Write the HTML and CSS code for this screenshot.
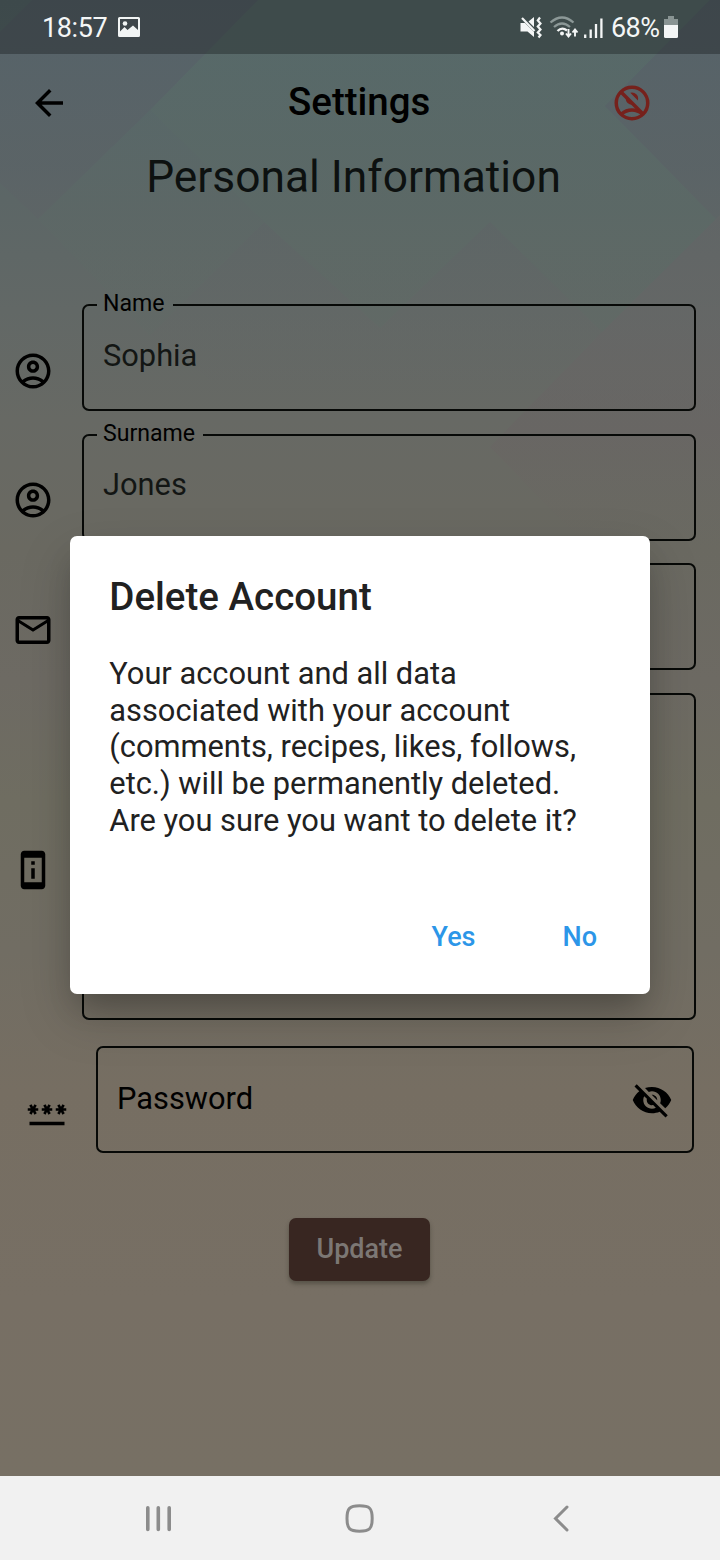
FILE: index.html
```html
<!DOCTYPE html>
<html lang="en">
<head>
<meta charset="utf-8">
<title>Settings</title>
<link rel="stylesheet" href="styles.css">
</head>
<body>
<svg class="symbols" aria-hidden="true">
  <symbol id="person" viewBox="0 0 24 24"><path d="M12 2C6.48 2 2 6.48 2 12s4.48 10 10 10 10-4.48 10-10S17.52 2 12 2zM7.35 18.5C8.66 17.56 10.26 17 12 17s3.34.56 4.65 1.5c-1.31.94-2.91 1.5-4.65 1.5s-3.34-.56-4.65-1.5zm10.79-1.38C16.45 15.8 14.32 15 12 15s-4.45.8-6.14 2.12C4.7 15.73 4 13.95 4 12c0-4.42 3.58-8 8-8s8 3.58 8 8c0 1.95-.7 3.73-1.86 5.12zM12 6c-1.93 0-3.5 1.57-3.5 3.5S10.07 13 12 13s3.5-1.57 3.5-3.5S13.93 6 12 6zm0 5c-.83 0-1.5-.67-1.5-1.5S11.17 8 12 8s1.5.67 1.5 1.5S12.83 11 12 11z"/></symbol>
  <symbol id="star" viewBox="0 0 8 24"><path d="M3.15 12.95L4 11.47l.85 1.48 1.3-.75-.85-1.48H7v-1.5H5.3l.85-1.47L4.85 7 4 8.47 3.15 7l-1.3.75.85 1.47H1v1.5h1.7l-.85 1.48z"/></symbol>
</svg>
<div class="screen">
  <svg class="backdrop" viewBox="0 0 720 1476" aria-hidden="true">
    <defs>
      <linearGradient id="green" x1="0" y1="0" x2="0" y2="340" gradientUnits="userSpaceOnUse"><stop offset="0" stop-color="#576a68" stop-opacity=".7"/><stop offset=".6" stop-color="#5b6a66" stop-opacity=".6"/><stop offset="1" stop-color="#606a65" stop-opacity=".5"/></linearGradient>
      <linearGradient id="violet" x1="0" y1="0" x2="0" y2="330" gradientUnits="userSpaceOnUse"><stop offset="0" stop-color="#566168" stop-opacity=".7"/><stop offset=".5" stop-color="#5b6266" stop-opacity=".6"/><stop offset="1" stop-color="#646666" stop-opacity=".3"/></linearGradient>
      <linearGradient id="rose" x1="0" y1="300" x2="0" y2="560" gradientUnits="userSpaceOnUse"><stop offset="0" stop-color="#696466" stop-opacity=".3"/><stop offset=".5" stop-color="#696363" stop-opacity=".5"/><stop offset="1" stop-color="#6c6861" stop-opacity="0"/></linearGradient>
    </defs>
    <path fill="url(#green)" d="M258 0H710L605 106L716 219L602 332L490 222L380 328L264 222L150 110Z"/>
    <path fill="url(#green)" opacity=".5" d="M0 0H32L0 32ZM150 110L264 222L150 336L38 219Z"/>
    <path fill="url(#violet)" d="M32 0H258L150 110L38 219L0 183V32ZM720 0H710L605 106L716 219L720 215Z"/>
    <path fill="url(#violet)" opacity=".5" d="M264 222L380 328L490 222L602 332L550 380H210L150 336Z"/>
    <path fill="url(#rose)" d="M720 215L602 332L490 447L600 560H720Z"/>
  </svg>

  <header class="status">
    <span class="clock">18:57</span>
    <svg class="status-photo" viewBox="0 0 22 20" width="22" height="20"><path fill="#f1f4f4" fill-rule="evenodd" d="M1.500 0H20.500Q22 0 22 1.500V18.500Q22 20 20.500 20H1.500Q0 20 0 18.500V1.500Q0 0 1.500 0ZM2 2V14.500L6.500 10L9.500 13L15 8.500L20 13V2Z"/><circle cx="7" cy="6.500" r="2.300" fill="#f1f4f4"/></svg>
    <span class="grow"></span>
    <svg class="status-tray" viewBox="0 0 84 24" width="84" height="24">
      <g fill="#f4f6f6"><path d="M.5 8H5L14 17V22L7.500 16.500H.5ZM8.500 6.500L14 2V12Z"/><path d="M2 3L14.500 16" stroke="#f4f6f6" stroke-width="2.200"/></g>
      <g fill="none" stroke="#f4f6f6" stroke-width="2.200"><path d="M20 2.500L17.800 5.500L20.500 8.500L17.800 11.500L20.500 14.500L17.800 17.500L20.500 20L18.500 22.500"/></g>
      <g fill="none" stroke-width="2.300"><path stroke="#8c9897" d="M30.500 7.500Q42 -2.500 53.500 7.500M34 12Q42 5 50 12"/><path stroke="#f4f6f6" d="M37.500 16Q42 11.500 47 15.500"/></g>
      <circle cx="42" cy="18.500" r="2" fill="#f4f6f6"/>
      <path d="M48.500 14V21M46 18.500L48.500 21.500L51 18.500M55 21.500V15M52.500 17.500L55 14.500L57.500 17.500" fill="none" stroke="#f4f6f6" stroke-width="1.900"/>
      <path d="M65.200 23V19.500M70.700 23V14.500M76 23V9M81.400 23V3.500" stroke="#f4f6f6" stroke-width="2.300"/>
    </svg>
    <span class="battery-text">68%</span>
    <svg class="status-battery" viewBox="0 0 14 22" width="14" height="22"><path fill="#899493" d="M4 0H10V3H14V10H0V3H4Z"/><path fill="#f4f6f6" d="M0 9H14V20.500Q14 22 12.500 22H1.500Q0 22 0 20.500Z"/></svg>
  </header>

  <div class="appbar">
    <svg class="icon" viewBox="0 0 24 24"><path d="M20 11H7.830l5.590-5.590L12 4l-8 8 8 8 1.410-1.410L7.830 13H20v-2z"/></svg>
    <h1 class="appbar-title"><span>Settings</span></h1>
    <svg class="icon danger" viewBox="0 0 24 24"><g fill="none" stroke="currentColor" stroke-width="2"><circle cx="12" cy="12" r="9"/><path d="M5.300 5.300L18.700 18.700"/><path d="M6 18.300Q8.600 16 12 16T18 18.300"/></g><path d="M11 6.150A3.500 3.500 0 0 1 15.350 10.500ZM8.600 8.600A3.500 3.500 0 0 0 12.900 12.900Z"/></svg>
  </div>

  <h2 class="heading"><span>Personal Information</span></h2>

  <form class="form">
    <div class="row">
      <svg class="icon"><use href="#person"/></svg>
      <fieldset class="field"><legend>Name</legend><span class="value">Sophia</span></fieldset>
    </div>
    <div class="row">
      <svg class="icon"><use href="#person"/></svg>
      <fieldset class="field"><legend>Surname</legend><span class="value">Jones</span></fieldset>
    </div>
    <div class="row">
      <svg class="icon" viewBox="0 0 24 24"><path d="M22 6c0-1.100-.9-2-2-2H4c-1.100 0-2 .9-2 2v12c0 1.100.9 2 2 2h16c1.100 0 2-.9 2-2V6zm-2 0l-8 5-8-5h16zm0 12H4V8l8 5 8-5v10z"/></svg>
      <div class="field plain"></div>
    </div>
    <div class="row about">
      <svg class="icon" viewBox="0 0 24 24"><path fill-rule="evenodd" d="M13 7h-2v2h2V7zm0 4h-2v6h2v-6zm4-9.990L7 1c-1.100 0-2 .9-2 2v18c0 1.100.9 2 2 2h10c1.100 0 2-.9 2-2V3c0-1.100-.9-1.990-2-1.990zM17 19H7V5h10v14z"/></svg>
      <div class="field plain"></div>
    </div>
    <div class="password-row">
      <svg class="icon" viewBox="0 0 24 24"><path d="M2 17h20v2H2z"/><use href="#star" width="8" height="24"/><use href="#star" x="8" width="8" height="24"/><use href="#star" x="16" width="8" height="24"/></svg>
      <div class="password">
        <span class="password-label">Password</span>
        <svg class="icon" viewBox="0 0 24 24"><path d="M12 7c2.760 0 5 2.240 5 5 0 .65-.13 1.260-.36 1.830l2.920 2.920c1.510-1.260 2.700-2.890 3.430-4.750-1.730-4.390-6-7.500-11-7.500-1.400 0-2.740.25-3.980.7l2.160 2.160C10.740 7.130 11.350 7 12 7zM2 4.270l2.280 2.280.46.46C3.080 8.300 1.780 10.020 1 12c1.730 4.390 6 7.500 11 7.500 1.550 0 3.030-.3 4.380-.84l.42.42L19.730 22 21 20.730 3.270 3 2 4.270zM7.530 9.800l1.550 1.550c-.05.21-.08.43-.08.65 0 1.660 1.340 3 3 3 .22 0 .44-.03.65-.08l1.550 1.550c-.67.33-1.410.53-2.200.53-2.760 0-5-2.240-5-5 0-.79.2-1.530.53-2.200zm4.310-.78l3.150 3.150.02-.16c0-1.660-1.340-3-3-3l-.17.01z"/></svg>
      </div>
    </div>
    <button class="update" type="button">Update</button>
  </form>

  <nav class="navbar">
    <svg viewBox="0 0 32 32" width="32" height="32"><path d="M5.800 5.800V27.500M16.300 5.800V27.500M27.200 5.800V27.500" fill="none" stroke="#8c8c8c" stroke-width="3.600" stroke-linecap="round"/></svg>
    <svg viewBox="0 0 32 32" width="32" height="32"><path d="M15.500 3.800C25.500 3.800 28.200 6 28.200 16.500S25.500 29.200 15.500 29.200S3 26.500 3 16.500S5.500 3.800 15.500 3.800Z" fill="none" stroke="#8c8c8c" stroke-width="3"/></svg>
    <svg viewBox="0 0 32 32" width="32" height="32"><path d="M21 5L9.500 16.500L21 28" fill="none" stroke="#8c8c8c" stroke-width="3" stroke-linecap="round"/></svg>
  </nav>

  <section class="dialog" role="dialog">
    <h3 class="dialog-title"><span>Delete Account</span></h3>
    <p class="dialog-text">Your account and all data<br>associated with your account<br>(comments, recipes, likes, follows,<br>etc.) will be permanently deleted.<br>Are you sure you want to delete it?</p>
    <div class="dialog-actions"><button type="button">Yes</button><button type="button">No</button></div>
  </section>
</div>
</body>
</html>
```
FILE: styles.css
```css
* { box-sizing: border-box; }
body { margin: 0; font-family: Roboto, "Liberation Sans", sans-serif; color: #000; }
h1, h2, h3, p { margin: 0; }
button { font: inherit; border: 0; background: none; padding: 0; }
.symbols { position: absolute; width: 0; height: 0; }

.screen {
  position: relative;
  width: 720px; height: 1560px;
  overflow: hidden;
  display: flex; flex-direction: column;
  background: linear-gradient(#546469 0, #56666a 55px, #5c6666 200px, #626866 310px, #676964 420px, #6a6961 550px, #6d6a63 680px, #6f6d61 800px, #716d63 950px, #766e62 1090px, #776f64 1300px, #777064 1476px);
}
.backdrop { position: absolute; left: 0; top: 0; width: 720px; height: 1476px; }
.status, .appbar, .heading, .form, .navbar { position: relative; flex: none; }

.status {
  height: 54px; padding: 0 42px;
  display: flex; align-items: center;
  background: rgba(0, 0, 0, .28);
  color: #f4f6f6; font-size: 27px;
}
.clock { width: 76px; letter-spacing: -.4px; padding-top: 2px; }
.grow { flex: 1; }
.status-tray { margin-right: 7px; }
.battery-text { width: 53px; letter-spacing: -.6px; padding-top: 2px; white-space: nowrap; }

.icon { width: 42px; height: 42px; flex: none; display: block; fill: currentColor; }
.danger { color: #76211c; }

.appbar { height: 98px; padding: 0 66.6px 0 28px; display: flex; align-items: center; }
.appbar-title { flex: 1; text-align: center; font-size: 38.5px; font-weight: 500; line-height: 46px; padding: 0 0 2px 37px; }
.heading { height: 152px; padding: 0 13px 0 0; text-align: center; font-size: 44.3px; font-weight: 400; line-height: 51px; color: #0d1110; }

.form { height: 1184px; display: flex; flex-direction: column; padding: 0 24px 0 12px; margin-top: -12px; }
.row { height: 129.5px; display: flex; gap: 28px; flex: none; }
.row .icon { margin-top: 57.9px; }
.field { flex: 1; min-width: 0; height: 119px; margin: 0; padding: 0; border: 2px solid #070907; border-radius: 7px; }
.field legend { margin-left: 13px; padding: 0 8px 0 6px; height: 26px; line-height: 24px; font-size: 23.1px; }
.value { display: block; margin: 20px 0 0 19px; font-size: 30.8px; line-height: 36px; color: #131614; }
.row + .row .value { margin-top: 19px; }
.plain { margin-top: 12px; height: 107px; }
.about { height: 354px; }
.about .icon { margin-top: 168px; }
.about .plain { height: 327px; }
.password-row { display: flex; gap: 28px; margin: 11px 2px 0 14px; align-items: center; height: 107px; flex: none; }
.password-row > .icon { margin-top: 27px; }
.password { flex: 1; height: 107px; border: 2px solid #070907; border-radius: 7px; padding: 1px 19px 0; display: flex; align-items: center; justify-content: space-between; }
.password-label { font-size: 30.8px; line-height: 36px; padding-bottom: 1px; }
.update { width: 141px; height: 63px; margin: 65px 0 0 277px; border-radius: 7px; background: #382621; color: #7c7774; font-size: 27px; font-weight: 500; box-shadow: 0 3px 4px rgba(40, 40, 30, .4); }

.navbar { height: 84px; background: #f1f1f1; display: flex; align-items: center; justify-content: space-between; padding: 0 142px; }

.dialog {
  position: absolute; left: 70px; top: 536px;
  width: 580px; height: 458px; padding: 38px 40px 0 39.3px;
  display: flex; flex-direction: column;
  background: #fff; border-radius: 7px;
  box-shadow: 0 18px 28px -8px rgba(0, 0, 0, .2), 0 22px 52px rgba(0, 0, 0, .17);
  color: #212121;
}
.dialog-title { font-size: 38.5px; line-height: 46px; font-weight: 500; }
.dialog-text { margin-top: 35.8px; font-size: 30.8px; line-height: 36.75px; white-space: nowrap; }
.dialog-actions { display: flex; justify-content: flex-end; gap: 87px; margin: 80px 13px 0 0; font-size: 27px; font-weight: 500; line-height: 34px; }
.dialog-actions button { color: #2c96e8; }
```
